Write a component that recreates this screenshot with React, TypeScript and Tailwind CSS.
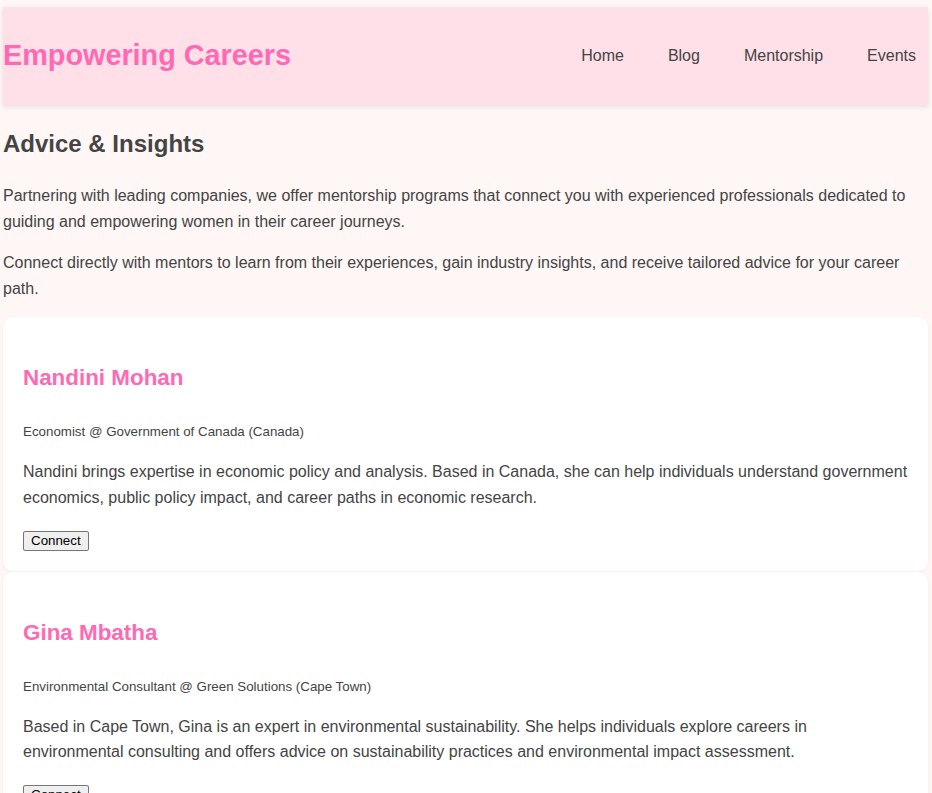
import React from 'react';

interface Mentor {
  id: string;
  name: string;
  role: string;
  bio: string;
}

const navLinks = ['Home', 'Blog', 'Mentorship', 'Events'];

const mentors: Mentor[] = [
  {
    id: '1',
    name: 'Nandini Mohan',
    role: 'Economist @ Government of Canada (Canada)',
    bio: 'Nandini brings expertise in economic policy and analysis. Based in Canada, she can help individuals understand government economics, public policy impact, and career paths in economic research.',
  },
  {
    id: '2',
    name: 'Gina Mbatha',
    role: 'Environmental Consultant @ Green Solutions (Cape Town)',
    bio: 'Based in Cape Town, Gina is an expert in environmental sustainability. She helps individuals explore careers in environmental consulting and offers advice on sustainability practices and environmental impact assessment.',
  },
];

const App = () => {
  return (
    <div className="min-h-[793px] bg-[#fff6f6] px-[3px] pt-[7px] font-['Liberation_Sans',Arial,sans-serif] text-[#444]">
      <div className="w-[925px]">
        {/* Header */}
        <header className="flex h-[98px] items-center justify-between bg-[#ffe0e8] pr-3 shadow-[0_2px_5px_rgba(0,0,0,0.1)]">
          <h1 className="text-[28.8px] font-bold text-[#ff69b4]">Empowering Careers</h1>
          <nav className="flex gap-[44px] text-base">
            {navLinks.map((link) => (
              <a key={link} href="#" className="text-[#444]">
                {link}
              </a>
            ))}
          </nav>
        </header>

        {/* Intro */}
        <section className="pt-[20px]">
          <h2 className="text-2xl leading-[38px] font-bold">Advice &amp; Insights</h2>
          <p className="mt-[20px] text-base leading-[25.6px]">
            Partnering with leading companies, we offer mentorship programs that connect you with experienced professionals dedicated to guiding and empowering women in their career journeys.
          </p>
          <p className="mt-[16px] text-base leading-[25.6px]">
            Connect directly with mentors to learn from their experiences, gain industry insights, and receive tailored advice for your career path.
          </p>
        </section>

        {/* Mentor cards */}
        <div className="mt-[16px] flex flex-col gap-[1px]">
          {mentors.map((mentor) => (
            <div key={mentor.id} className="rounded-[10px] bg-white p-5 shadow-[0_1px_4px_rgba(0,0,0,0.04)]">
              <h3 className="mt-[23px] text-[22.4px] leading-[36px] font-bold text-[#ff69b4]">{mentor.name}</h3>
              <p className="mt-[25px] text-[13.33px] leading-[21px]">{mentor.role}</p>
              <p className="mt-[17px] text-base leading-[25.6px]">{mentor.bio}</p>
              <button className="mt-[20px] block h-[20px] rounded-[2px] border border-[#767676] bg-[#efefef] px-[7px] text-[13.33px] leading-[16px] text-black">
                Connect
              </button>
            </div>
          ))}
        </div>
      </div>
    </div>
  );
};

export default App;
